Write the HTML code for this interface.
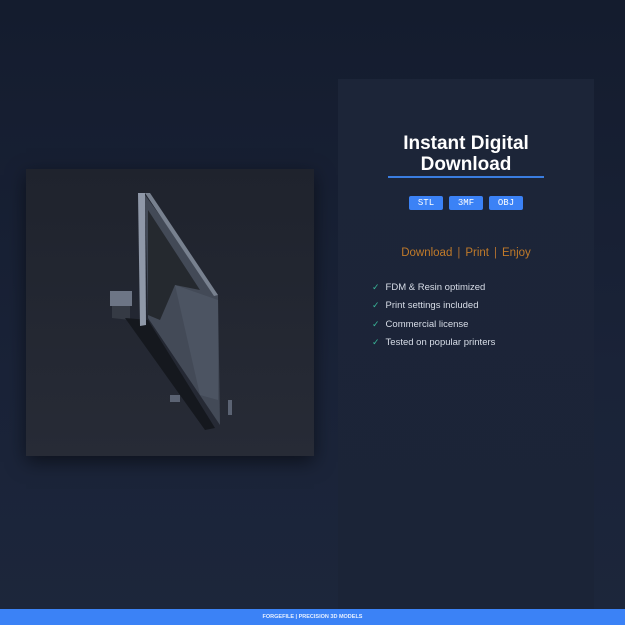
<!DOCTYPE html>
<html><head><style>
*{margin:0;padding:0;box-sizing:border-box}
body{width:625px;height:625px;overflow:hidden;background:linear-gradient(180deg,#141c2e 0%,#1a2338 60%,#1c263b 100%);font-family:"Liberation Sans",sans-serif;position:relative}
.img{position:absolute;left:26px;top:169px;width:288px;height:287px;background:linear-gradient(180deg,#1f232d,#272b36);box-shadow:0 6px 18px rgba(0,0,0,.5)}
.panel{position:absolute;left:338px;top:79px;width:256px;height:530px;background:linear-gradient(180deg,#1c2538,#1b2437)}
h1{position:absolute;left:0;width:100%;top:54px;text-align:center;color:#fff;font-size:19px;line-height:21px;font-weight:bold}
.rule{position:absolute;left:50px;width:156px;top:97px;height:2px;background:#3a7de0}
.tags{position:absolute;top:117px;left:0;width:100%;text-align:center;font-size:0}
.tags span{display:inline-block;width:34px;height:14px;margin:0 3px;background:#3b82f6;border-radius:2px;color:#fff;font-family:"Liberation Mono",monospace;font-size:9px;line-height:14px}
.dl{position:absolute;top:168px;width:100%;text-align:center;color:#c07a2a;font-size:11.5px}
.dl i{font-style:normal;margin:0 5px;color:#b07030}
ul{position:absolute;left:34px;top:203px;list-style:none;color:#d8dde8;font-size:9.5px}
li{height:18.3px}
li b{color:#3ab79a;font-weight:normal;margin-right:6px;font-size:9px}
.foot{position:absolute;left:0;top:609px;width:625px;height:16px;background:#3b82f6;color:#e8f0ff;font-size:5.5px;font-weight:bold;text-align:center;line-height:16px}
</style></head><body>
<div class="img">
<svg width="288" height="287" viewBox="26 169 288 287">
<polygon points="110,291 132,291 132,306 110,306" fill="#6d7585"/>
<polygon points="112,306 130,306 130,320 112,318" fill="#353a44"/>
<polygon points="125,318 148,320 215,428 205,430" fill="#15181e"/>
<polygon points="145,195 218,295 220,425 148,318" fill="#434a57"/>
<polygon points="148,210 200,290 175,285 160,320 148,315" fill="#25292f"/>
<polygon points="175,285 218,300 218,400 200,395" fill="#4c5462"/>
<polygon points="138,193 145,193 146,325 140,326" fill="#8f98a8"/>
<polygon points="145,193 150,193 218,295 214,296" fill="#78818f"/>
<polygon points="170,395 180,395 180,402 170,402" fill="#5b6373"/>
<polygon points="228,400 232,400 232,415 228,415" fill="#5b6373"/>
</svg>
</div>
<div class="panel">
<h1>Instant Digital<br>Download</h1>
<div class="rule"></div>
<div class="tags"><span>STL</span><span>3MF</span><span>OBJ</span></div>
<div class="dl">Download<i>|</i>Print<i>|</i>Enjoy</div>
<ul>
<li><b>✓</b>FDM &amp; Resin optimized</li>
<li><b>✓</b>Print settings included</li>
<li><b>✓</b>Commercial license</li>
<li><b>✓</b>Tested on popular printers</li>
</ul>
</div>
<div class="foot">FORGEFILE | PRECISION 3D MODELS</div>
</body></html>
